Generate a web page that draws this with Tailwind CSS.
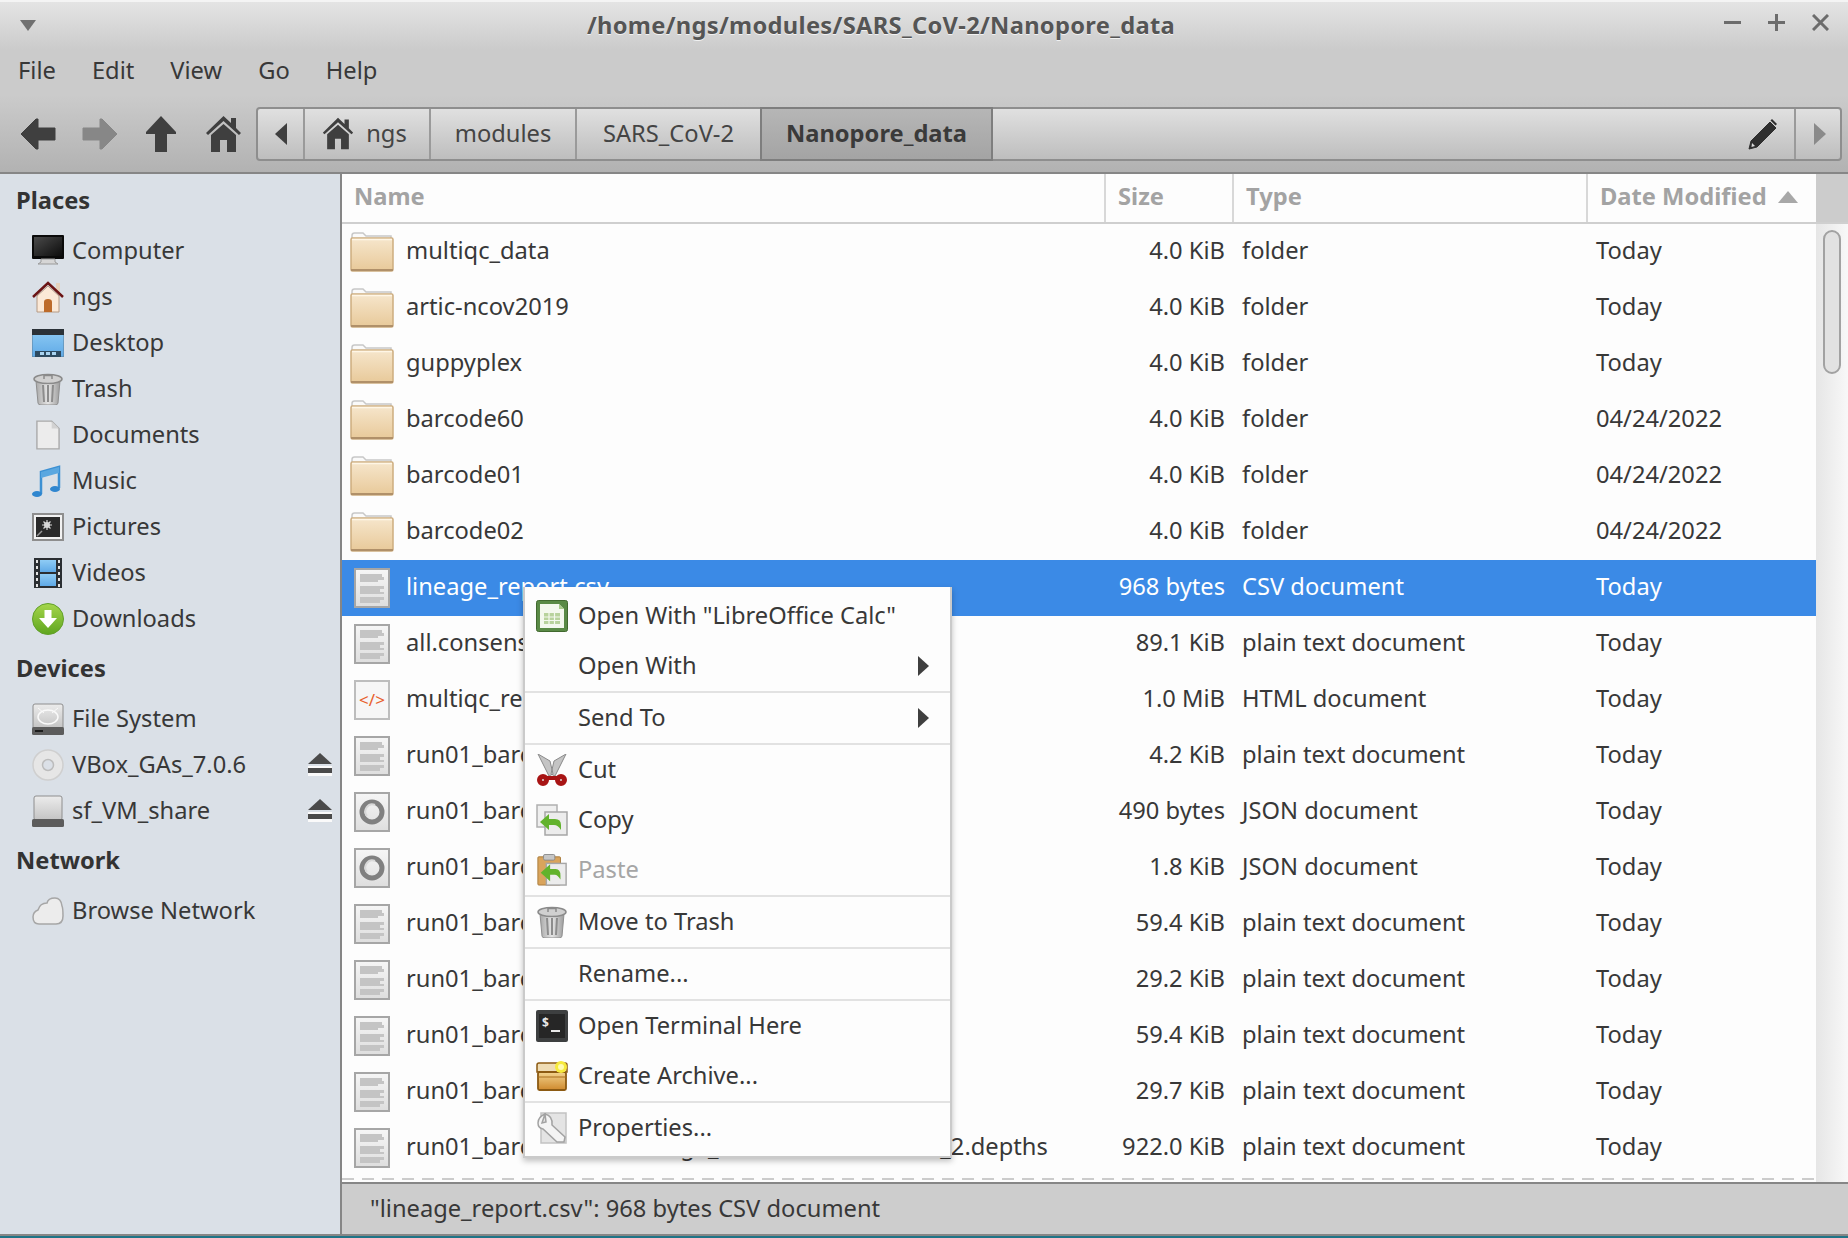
<!DOCTYPE html>
<html lang="en">
<head>
<meta charset="utf-8">
<title>/home/ngs/modules/SARS_CoV-2/Nanopore_data</title>
<script src="https://cdn.jsdelivr.net/npm/@tailwindcss/browser@4"></script>
</head>
<body class="relative w-[1848px] h-[1238px] overflow-hidden flex flex-col bg-[#ccc] text-[#383838] text-[23.7px] font-['Noto_Sans',sans-serif]">

<!-- icon sheet -->
<svg class="absolute w-0 h-0" aria-hidden="true">
  <defs>
    <linearGradient id="gFolder" x1="0" y1="0" x2="0" y2="1"><stop offset="0" stop-color="#f6e6cc"/><stop offset="1" stop-color="#e8c999"/></linearGradient>
    <linearGradient id="gDoc" x1="0" y1="0" x2="0" y2="1"><stop offset="0" stop-color="#f6f6f6"/><stop offset="1" stop-color="#dedede"/></linearGradient>
    <linearGradient id="gScreen" x1="0" y1="0" x2="1" y2="1"><stop offset="0" stop-color="#4a4a4a"/><stop offset="1" stop-color="#0c0c0c"/></linearGradient>
    <linearGradient id="gBlue" x1="0" y1="0" x2="0" y2="1"><stop offset="0" stop-color="#8fccf5"/><stop offset="1" stop-color="#5fa9e6"/></linearGradient>
    <linearGradient id="gTrash" x1="0" y1="0" x2="1" y2="0"><stop offset="0" stop-color="#a9a9a9"/><stop offset=".5" stop-color="#e4e4e4"/><stop offset="1" stop-color="#9c9c9c"/></linearGradient>
    <linearGradient id="gGreen" x1="0" y1="0" x2="0" y2="1"><stop offset="0" stop-color="#a5d64c"/><stop offset="1" stop-color="#5fa51f"/></linearGradient>
    <linearGradient id="gDisk" x1="0" y1="0" x2="0" y2="1"><stop offset="0" stop-color="#ececec"/><stop offset="1" stop-color="#c4c4c4"/></linearGradient>
    <linearGradient id="gBox" x1="0" y1="0" x2="0" y2="1"><stop offset="0" stop-color="#f3d48f"/><stop offset="1" stop-color="#cf8a2e"/></linearGradient>

    <symbol id="i-folder" viewBox="0 0 44 40">
      <path d="M2 8V3.500Q2 1 4.500 1H13l3 3h25v4z" fill="#fafafa" stroke="#c8c8c8" stroke-width="1.500"/>
      <rect x="1" y="6" width="42" height="33" rx="1.500" fill="url(#gFolder)" stroke="#cdad7f" stroke-width="1.500"/>
      <path d="M1 38h42" stroke="#b09069" stroke-width="2"/>
      <path d="M2 7.500h40" stroke="#fff6e6" stroke-width="1.500"/>
    </symbol>
    <symbol id="i-doc" viewBox="0 0 36 40">
      <rect x="1" y="1" width="34" height="38" fill="url(#gDoc)" stroke="#a6a6a6" stroke-width="2"/>
      <path d="M6 6h22v3H6zM6 9h24v3H6zM6 12h18v2H6zM6 18h24v3H6zM6 21h20v3H6zM6 24h24v2H6zM6 29h24v3H6zM6 32h20v3H6z" fill="#c4c4c4"/>
    </symbol>
    <symbol id="i-json" viewBox="0 0 36 40">
      <rect x="1" y="1" width="34" height="38" fill="url(#gDoc)" stroke="#a6a6a6" stroke-width="2"/>
      <circle cx="18" cy="20" r="10" fill="none" stroke="#808080" stroke-width="5"/>
      <path d="M13 24a7 7 0 0 1 8-11" fill="none" stroke="#d8d8d8" stroke-width="2"/>
    </symbol>
    <symbol id="i-html" viewBox="0 0 36 40">
      <rect x="1" y="1" width="34" height="38" fill="#f6f6f6" stroke="#bdbdbd" stroke-width="2"/>
      <text x="18" y="26" text-anchor="middle" font-size="17" font-family="Noto Sans, sans-serif" fill="#e8602c">&lt;/&gt;</text>
    </symbol>
    <symbol id="i-computer" viewBox="0 0 32 32">
      <rect x="0" y="0" width="32" height="24" rx="1" fill="#0a0a0a"/>
      <rect x="2" y="2" width="28" height="19" fill="url(#gScreen)"/>
      <path d="M9 24h14v3l3 2H6l3-2z" fill="#d6d6d6" stroke="#9a9a9a"/>
    </symbol>
    <symbol id="i-home" viewBox="0 0 32 32">
      <path d="M5 15L16 5l11 10v16H5z" fill="#fbe9d7" stroke="#b59a84"/>
      <rect x="24" y="2" width="4" height="9" fill="#e6d3bd"/>
      <path d="M1 16L16 2l15 14" fill="none" stroke="#6b1414" stroke-width="2.500"/>
      <path d="M12 31V21q0-3 4-3t4 3v10z" fill="#bd6b2a"/>
    </symbol>
    <symbol id="i-desktop" viewBox="0 0 32 28">
      <rect x="0" y="0" width="32" height="28" rx="1" fill="url(#gBlue)" stroke="#5c7f99"/>
      <rect x="0" y="0" width="32" height="6" fill="#2b3238"/>
      <path d="M3 28v-6h26v6z" fill="#2d4a60"/>
      <path d="M8 23h4v3H8zM14 23h4v3h-4zM20 23h4v3h-4z" fill="#a9d3f0"/>
    </symbol>
    <symbol id="i-trash" viewBox="0 0 32 32">
      <path d="M4 8h24l-2 22q-.2 2-3 2H9q-2.800 0-3-2z" fill="url(#gTrash)" stroke="#8f8f8f"/>
      <path d="M11 12l1 17M16 12v17M21 12l-1 17" stroke="#8c8c8c" stroke-width="2"/>
      <ellipse cx="16" cy="6" rx="14" ry="4.500" fill="#d0d0d0" stroke="#8a8a8a" stroke-width="1.500"/>
      <path d="M12 6V2.500h8V6" fill="none" stroke="#8a8a8a" stroke-width="1.500"/>
    </symbol>
    <symbol id="i-paper" viewBox="0 0 26 32">
      <path d="M1 1h16l8 8v22H1z" fill="#ececec" stroke="#a9a9a9" stroke-width="1.500"/>
      <path d="M17 1v8h8z" fill="#d2d2d2"/>
    </symbol>
    <symbol id="i-music" viewBox="0 0 32 32">
      <path d="M9 29V7L27 2v21" fill="none" stroke="#3c90d3" stroke-width="2.500"/>
      <path d="M9 7L27 2v6L9 13z" fill="#5aa7e0"/>
      <ellipse cx="5" cy="29" rx="5" ry="3" fill="#2f86cf"/>
      <ellipse cx="23" cy="24" rx="5" ry="3" fill="#2f86cf"/>
    </symbol>
    <symbol id="i-pictures" viewBox="0 0 32 28">
      <rect x="1" y="1" width="30" height="26" fill="#f2f2f2" stroke="#8e8e8e" stroke-width="2"/>
      <rect x="4" y="4" width="24" height="20" fill="#2a2a2a"/>
      <circle cx="15" cy="12" r="3" fill="#d8d8d8"/>
      <path d="M15 7v10M10 12h10M11.500 8.500l7 7M18.500 8.500l-7 7" stroke="#d8d8d8" stroke-width="1.200"/>
      <path d="M5 23l5-5" stroke="#9a9a9a" stroke-width="1.500"/>
    </symbol>
    <symbol id="i-videos" viewBox="0 0 28 30">
      <rect width="28" height="30" fill="#2b2f33"/>
      <rect x="6" y="2" width="16" height="12" fill="url(#gBlue)"/>
      <rect x="6" y="16" width="16" height="12" fill="url(#gBlue)"/>
      <path d="M2 2h2v3H2zM2 8h2v3H2zM2 14h2v3H2zM2 20h2v3H2zM2 26h2v3H2zM24 2h2v3h-2zM24 8h2v3h-2zM24 14h2v3h-2zM24 20h2v3h-2zM24 26h2v3h-2z" fill="#e4e4e4"/>
    </symbol>
    <symbol id="i-download" viewBox="0 0 32 32">
      <circle cx="16" cy="16" r="15.500" fill="url(#gGreen)" stroke="#62a02a"/>
      <path d="M12.500 7h7v8H25L16 25 7 15h5.500z" fill="#fff"/>
    </symbol>
    <symbol id="i-hd" viewBox="0 0 32 32">
      <path d="M3 1h26q2 0 2 2v22H1V3q0-2 2-2z" fill="url(#gDisk)" stroke="#8e8e8e"/>
      <ellipse cx="16" cy="14" rx="10" ry="7" fill="none" stroke="#fafafa" stroke-width="1.500"/>
      <path d="M6 5l6 5M26 5l-6 5" stroke="#fafafa"/>
      <rect x="0" y="24" width="32" height="8" rx="1.500" fill="#5c5c5c"/>
      <path d="M3 28h8" stroke="#1c1c1c" stroke-width="2"/>
    </symbol>
    <symbol id="i-cd" viewBox="0 0 32 32">
      <circle cx="16" cy="16" r="15" fill="#e6e6e6" stroke="#cfcfcf" stroke-width="1.500"/>
      <circle cx="16" cy="16" r="5.500" fill="#dbe0e7" stroke="#bcbcbc" stroke-width="1.500"/>
    </symbol>
    <symbol id="i-drive" viewBox="0 0 32 32">
      <rect x="2" y="1" width="28" height="24" rx="2" fill="url(#gDisk)" stroke="#8e8e8e"/>
      <rect x="0" y="24" width="32" height="8" rx="1.500" fill="#5c5c5c"/>
    </symbol>
    <symbol id="i-cloud" viewBox="0 0 32 28">
      <path d="M7 27Q1 27 1 20q0-5 5-7Q8 6 15 6q1-5 8-5 6 0 7 8 1 2 1 10 0 8-7 8z" fill="#ececec" stroke="#a6a6a6" stroke-width="1.500"/>
    </symbol>
    <symbol id="i-eject" viewBox="0 0 24 24">
      <path d="M12 0l12 11H0z" fill="#4a4a4a"/>
      <rect y="13" width="24" height="2" fill="#fafafa"/>
      <rect y="15" width="24" height="5" fill="#4a4a4a"/>
      <rect y="20" width="24" height="3" fill="#fafafa"/>
    </symbol>
    <symbol id="i-calc" viewBox="0 0 32 32">
      <rect x="0.500" y="0.500" width="31" height="31" rx="2" fill="#5a8a46" stroke="#41692f"/>
      <path d="M4 4h19l5 5v19H4z" fill="#f4f8ee"/>
      <path d="M23 4v5h5z" fill="#a8cb8a"/>
      <path d="M8 13h16v11H8z" fill="#b8d29c"/>
      <path d="M8 17h16M8 20.500h16M13 13v11M18.500 13v11" stroke="#f4f8ee" stroke-width="1.200"/>
    </symbol>
    <symbol id="i-cut" viewBox="0 0 32 32">
      <path d="M2 0l12 7 3 13-4 2zM30 0L18 7l-3 13 4 2z" fill="#c4c4c4" stroke="#8a8a8a"/>
      <circle cx="7" cy="26" r="3.500" fill="#d8d8d8" stroke="#a81414" stroke-width="5"/>
      <circle cx="25" cy="26" r="3.500" fill="#d8d8d8" stroke="#a81414" stroke-width="5"/>
      <path d="M11 24h10" stroke="#a81414" stroke-width="4"/>
    </symbol>
    <symbol id="i-copy" viewBox="0 0 32 32">
      <rect x="1" y="1" width="20" height="22" fill="#efefef" stroke="#b0b0b0" stroke-width="1.500"/>
      <rect x="9" y="8" width="22" height="23" fill="#ececec" stroke="#a6a6a6" stroke-width="1.500"/>
      <path d="M4 18l9-8v5h6q6 0 6 6v5q-3-5-7-5h-5v5z" fill="#62b32c"/>
    </symbol>
    <symbol id="i-paste" viewBox="0 0 32 34">
      <rect x="1" y="3" width="24" height="30" rx="1" fill="#d9a45c" stroke="#a87a3a"/>
      <rect x="7" y="0.500" width="12" height="6" rx="1.500" fill="#c6c6c6" stroke="#8a8a8a"/>
      <rect x="10" y="10" width="21" height="23" fill="#ececec" stroke="#a6a6a6" stroke-width="1.500"/>
      <path d="M4 20l10-9v5h6q5 0 5 7v4q-3-5-6-5h-5v7z" fill="#62b32c"/>
    </symbol>
    <symbol id="i-terminal" viewBox="0 0 32 32">
      <rect width="32" height="32" rx="2" fill="#3d3f40"/>
      <rect x="3" y="4" width="26" height="24" fill="#262626"/>
      <text x="6" y="17" font-size="12" font-weight="700" font-family="Noto Sans, sans-serif" fill="#e8e8e8">$</text>
      <path d="M15 21h9" stroke="#e8e8e8" stroke-width="2"/>
    </symbol>
    <symbol id="i-archive" viewBox="0 0 32 30">
      <path d="M1 4q0-2 2-2h26q2 0 2 2v7H1z" fill="#efdcb4" stroke="#8c5a12" stroke-width="1.500"/>
      <rect x="2" y="11" width="28" height="18" rx="1.500" fill="url(#gBox)" stroke="#8c5a12" stroke-width="1.800"/>
      <path d="M2 16h28" stroke="#a86f1e"/>
      <circle cx="25" cy="6" r="6" fill="#f7ea3c"/>
      <circle cx="25" cy="6" r="3" fill="#fffbb0"/>
    </symbol>
    <symbol id="i-props" viewBox="0 0 30 32">
      <path d="M4 1h25v30H4z" fill="#e4e4e4" stroke="#c2c2c2" stroke-width="1.500"/>
      <path d="M8 2q-7 3-7 9 0 5 5 6l14 13h7l1-5L15 13q1-9-7-11l1 8-4 1z" fill="#f4f4f4" stroke="#a2a2a2" stroke-width="1.500"/>
    </symbol>
    <symbol id="i-tri-right" viewBox="0 0 12 20"><path d="M1 0l11 10L1 20z" fill="currentColor"/></symbol>
  </defs>
</svg>

<!-- title bar -->
<div class="relative h-[50px] shrink-0 flex items-center justify-center border-t-2 border-[#f4f4f4] bg-linear-to-b from-[#e4e4e4] to-[#cbcbcb] text-[#555] font-bold tracking-[0.3px] [text-shadow:0_1px_0_#f2f2f2] pb-[1px] pr-[86px]">
  <svg class="absolute left-[20px] top-[18px] w-[16px] h-[11px]" viewBox="0 0 16 11"><path d="M0 0h16L8 11z" fill="#707070"/></svg>
  <span>/home/ngs/modules/SARS_CoV-2/Nanopore_data</span>
  <div class="absolute right-[19px] top-[12px] flex gap-[27px] items-center">
    <svg class="w-[17px] h-[17px]" viewBox="0 0 17 17"><path d="M0 8.500h17" stroke="#6c6c6c" stroke-width="3"/></svg>
    <svg class="w-[17px] h-[17px]" viewBox="0 0 17 17"><path d="M0 8.500h17M8.500 0v17" stroke="#6c6c6c" stroke-width="3"/></svg>
    <svg class="w-[17px] h-[17px]" viewBox="0 0 17 17"><path d="M1 1l15 15M16 1L1 16" stroke="#6c6c6c" stroke-width="3"/></svg>
  </div>
</div>

<!-- menu bar -->
<div class="h-[45px] shrink-0 flex items-center bg-[#cbcbcb] pl-[18px] pb-[3px] gap-[36px]">
  <span>File</span><span>Edit</span><span>View</span><span>Go</span><span>Help</span>
</div>

<!-- toolbar -->
<div class="h-[79px] shrink-0 flex items-center border-b-2 border-[#868686] bg-linear-to-b from-[#cbcbcb] to-[#b2b2b2] pl-[20px]">
  <svg class="w-[36px] h-[36px]" viewBox="0 0 36 36"><path d="M1 18L16 3h2v9h17v12H18v9h-2z" fill="#3f3f3f" stroke="#3f3f3f" stroke-linejoin="round"/></svg>
  <svg class="w-[36px] h-[36px] ml-[26px]" viewBox="0 0 36 36"><path d="M35 18L20 3h-2v9H1v12h17v9h2z" fill="#878787" stroke="#878787" stroke-linejoin="round"/></svg>
  <svg class="w-[32px] h-[38px] ml-[27px]" viewBox="0 0 32 38"><path d="M16 1L31 17v2h-9v18H10V19H1v-2z" fill="#3f3f3f"/></svg>
  <svg class="w-[35px] h-[38px] ml-[29px]" viewBox="0 0 35 38"><path d="M17.500 1L25 8V3h5v10l5 5-2 2-15.500-14L2 20l-2-2zM5 20L17.500 9 30 20v17h-9V25h-7v12H5z" fill="#3f3f3f"/></svg>
  <div class="ml-[15px] w-[1586px] h-[54px] flex border-2 border-[#8e8e8e] rounded-[4px] bg-linear-to-b from-[#e0e0e0] to-[#bebebe] text-[#444]">
    <div class="w-[47px] flex items-center justify-center border-r-2 border-[#9a9a9a]">
      <svg class="w-[12px] h-[22px]" viewBox="0 0 12 22"><path d="M12 0v22L0 11z" fill="#3f3f3f"/></svg>
    </div>
    <div class="w-[126px] flex items-center justify-center gap-[12px] border-r-2 border-[#9a9a9a] pr-[5px]">
      <svg class="w-[32px] h-[33px]" viewBox="0 0 35 38"><path d="M17.500 1L25 8V3h5v10l5 5-2 2-15.500-14L2 20l-2-2zM5 20L17.500 9 30 20v17h-9V25h-7v12H5z" fill="#3f3f3f"/></svg>
      <span>ngs</span>
    </div>
    <div class="w-[146px] flex items-center justify-center border-r-2 border-[#9a9a9a]">modules</div>
    <div class="w-[183px] flex items-center justify-center">SARS_CoV-2</div>
    <div class="w-[233px] -my-[2px] flex items-center justify-center font-bold border-2 border-[#7e7e7e] bg-linear-to-b from-[#b6b6b6] to-[#a4a4a4] text-[#3a3a3a]">Nanopore_data</div>
    <div class="flex-1 flex items-center justify-end pr-[16px]">
      <svg class="w-[30px] h-[32px]" viewBox="0 0 30 32"><path d="M22 4l6 6L9 29l-8 2 2-8z" fill="#2f2f2f" stroke="#2f2f2f"/><path d="M24 1l5 5-1.500 1.500-5-5z" fill="#2f2f2f"/><path d="M4 25l3 3-3.500 1z" fill="#ddd"/></svg>
    </div>
    <div class="w-[46px] flex items-center justify-center border-l-2 border-[#9a9a9a] pl-[3px]">
      <svg class="w-[12px] h-[22px]" viewBox="0 0 12 22"><path d="M0 0v22l12-11z" fill="#8a8a8a"/></svg>
    </div>
  </div>
</div>

<!-- main -->
<div class="flex-1 flex min-h-0">
  <!-- side pane -->
  <aside class="w-[342px] shrink-0 border-r-2 border-[#868686] bg-[#dae0e7] pt-[4px]">
    <div class="h-[46px] mb-[4px] flex items-center pl-[16px] font-bold text-[#333]">Places</div>
    <div class="h-[46px] flex items-center pl-[32px] gap-[8px]"><svg class="w-[32px] h-[32px]"><use href="#i-computer"/></svg>Computer</div>
    <div class="h-[46px] flex items-center pl-[32px] gap-[8px]"><svg class="w-[32px] h-[32px]"><use href="#i-home"/></svg>ngs</div>
    <div class="h-[46px] flex items-center pl-[32px] gap-[8px]"><svg class="w-[32px] h-[28px]"><use href="#i-desktop"/></svg>Desktop</div>
    <div class="h-[46px] flex items-center pl-[32px] gap-[8px]"><svg class="w-[32px] h-[32px]"><use href="#i-trash"/></svg>Trash</div>
    <div class="h-[46px] flex items-center pl-[36px] gap-[12px]"><svg class="w-[24px] h-[32px]"><use href="#i-paper"/></svg>Documents</div>
    <div class="h-[46px] flex items-center pl-[32px] gap-[8px]"><svg class="w-[32px] h-[32px]"><use href="#i-music"/></svg>Music</div>
    <div class="h-[46px] flex items-center pl-[32px] gap-[8px]"><svg class="w-[32px] h-[28px]"><use href="#i-pictures"/></svg>Pictures</div>
    <div class="h-[46px] flex items-center pl-[34px] gap-[10px]"><svg class="w-[28px] h-[30px]"><use href="#i-videos"/></svg>Videos</div>
    <div class="h-[46px] flex items-center pl-[32px] gap-[8px]"><svg class="w-[32px] h-[32px]"><use href="#i-download"/></svg>Downloads</div>
    <div class="h-[54px] flex items-center pl-[16px] font-bold text-[#333]">Devices</div>
    <div class="h-[46px] flex items-center pl-[32px] gap-[8px]"><svg class="w-[32px] h-[32px]"><use href="#i-hd"/></svg>File System</div>
    <div class="h-[46px] flex items-center pl-[32px] pr-[8px] gap-[8px]"><svg class="w-[32px] h-[32px]"><use href="#i-cd"/></svg>VBox_GAs_7.0.6<svg class="w-[24px] h-[24px] ml-auto"><use href="#i-eject"/></svg></div>
    <div class="h-[46px] flex items-center pl-[32px] pr-[8px] gap-[8px]"><svg class="w-[32px] h-[32px]"><use href="#i-drive"/></svg>sf_VM_share<svg class="w-[24px] h-[24px] ml-auto"><use href="#i-eject"/></svg></div>
    <div class="h-[54px] flex items-center pl-[16px] font-bold text-[#333]">Network</div>
    <div class="h-[46px] flex items-center pl-[32px] gap-[8px]"><svg class="w-[32px] h-[28px]"><use href="#i-cloud"/></svg>Browse Network</div>
  </aside>

  <!-- file list + status -->
  <div class="flex-1 flex flex-col min-w-0">
    <div class="flex-1 flex min-h-0 bg-[#fdfdfd]">
      <div class="flex-1 min-w-0">
        <div class="h-[50px] grid grid-cols-[764px_128px_354px_228px] border-b-2 border-[#cfcfcf] font-bold text-[#a3a3a3]">
          <div class="flex items-center pl-[12px] pb-[2px] border-r-2 border-[#d8d8d8]">Name</div>
          <div class="flex items-center pl-[12px] pb-[2px] border-r-2 border-[#d8d8d8]">Size</div>
          <div class="flex items-center pl-[12px] pb-[2px] border-r-2 border-[#d8d8d8]">Type</div>
          <div class="flex items-center pl-[12px] pb-[2px] gap-[11px]">Date Modified<svg class="w-[20px] h-[12px]" viewBox="0 0 20 12"><path d="M10 0l10 12H0z" fill="#a8a8a8"/></svg></div>
        </div>

        <div class="h-[56px] pb-[2px] grid grid-cols-[762px_128px_354px_230px] items-center">
          <div class="flex items-center overflow-hidden whitespace-nowrap"><svg class="w-[44px] h-[40px] ml-[8px] mr-[12px] mt-[2px] shrink-0"><use href="#i-folder"/></svg>multiqc_data</div>
          <div class="text-right pr-[7px]">4.0 KiB</div><div class="pl-[10px]">folder</div><div class="pl-[10px]">Today</div>
        </div>
        <div class="h-[56px] pb-[2px] grid grid-cols-[762px_128px_354px_230px] items-center">
          <div class="flex items-center overflow-hidden whitespace-nowrap"><svg class="w-[44px] h-[40px] ml-[8px] mr-[12px] mt-[2px] shrink-0"><use href="#i-folder"/></svg>artic-ncov2019</div>
          <div class="text-right pr-[7px]">4.0 KiB</div><div class="pl-[10px]">folder</div><div class="pl-[10px]">Today</div>
        </div>
        <div class="h-[56px] pb-[2px] grid grid-cols-[762px_128px_354px_230px] items-center">
          <div class="flex items-center overflow-hidden whitespace-nowrap"><svg class="w-[44px] h-[40px] ml-[8px] mr-[12px] mt-[2px] shrink-0"><use href="#i-folder"/></svg>guppyplex</div>
          <div class="text-right pr-[7px]">4.0 KiB</div><div class="pl-[10px]">folder</div><div class="pl-[10px]">Today</div>
        </div>
        <div class="h-[56px] pb-[2px] grid grid-cols-[762px_128px_354px_230px] items-center">
          <div class="flex items-center overflow-hidden whitespace-nowrap"><svg class="w-[44px] h-[40px] ml-[8px] mr-[12px] mt-[2px] shrink-0"><use href="#i-folder"/></svg>barcode60</div>
          <div class="text-right pr-[7px]">4.0 KiB</div><div class="pl-[10px]">folder</div><div class="pl-[10px]">04/24/2022</div>
        </div>
        <div class="h-[56px] pb-[2px] grid grid-cols-[762px_128px_354px_230px] items-center">
          <div class="flex items-center overflow-hidden whitespace-nowrap"><svg class="w-[44px] h-[40px] ml-[8px] mr-[12px] mt-[2px] shrink-0"><use href="#i-folder"/></svg>barcode01</div>
          <div class="text-right pr-[7px]">4.0 KiB</div><div class="pl-[10px]">folder</div><div class="pl-[10px]">04/24/2022</div>
        </div>
        <div class="h-[56px] pb-[2px] grid grid-cols-[762px_128px_354px_230px] items-center">
          <div class="flex items-center overflow-hidden whitespace-nowrap"><svg class="w-[44px] h-[40px] ml-[8px] mr-[12px] mt-[2px] shrink-0"><use href="#i-folder"/></svg>barcode02</div>
          <div class="text-right pr-[7px]">4.0 KiB</div><div class="pl-[10px]">folder</div><div class="pl-[10px]">04/24/2022</div>
        </div>
        <div class="h-[56px] pb-[2px] grid grid-cols-[762px_128px_354px_230px] items-center bg-[#3b8ae6] text-white">
          <div class="flex items-center overflow-hidden whitespace-nowrap"><svg class="w-[36px] h-[40px] ml-[12px] mr-[16px] mt-[2px] shrink-0"><use href="#i-doc"/></svg>lineage_report.csv</div>
          <div class="text-right pr-[7px]">968 bytes</div><div class="pl-[10px]">CSV document</div><div class="pl-[10px]">Today</div>
        </div>
        <div class="h-[56px] pb-[2px] grid grid-cols-[762px_128px_354px_230px] items-center">
          <div class="flex items-center overflow-hidden whitespace-nowrap"><svg class="w-[36px] h-[40px] ml-[12px] mr-[16px] mt-[2px] shrink-0"><use href="#i-doc"/></svg>all.consensus.fasta</div>
          <div class="text-right pr-[7px]">89.1 KiB</div><div class="pl-[10px]">plain text document</div><div class="pl-[10px]">Today</div>
        </div>
        <div class="h-[56px] pb-[2px] grid grid-cols-[762px_128px_354px_230px] items-center">
          <div class="flex items-center overflow-hidden whitespace-nowrap"><svg class="w-[36px] h-[40px] ml-[12px] mr-[16px] mt-[2px] shrink-0"><use href="#i-html"/></svg>multiqc_report.html</div>
          <div class="text-right pr-[7px]">1.0 MiB</div><div class="pl-[10px]">HTML document</div><div class="pl-[10px]">Today</div>
        </div>
        <div class="h-[56px] pb-[2px] grid grid-cols-[762px_128px_354px_230px] items-center">
          <div class="flex items-center overflow-hidden whitespace-nowrap"><svg class="w-[36px] h-[40px] ml-[12px] mr-[16px] mt-[2px] shrink-0"><use href="#i-doc"/></svg>run01_barcode01.alignreport.txt</div>
          <div class="text-right pr-[7px]">4.2 KiB</div><div class="pl-[10px]">plain text document</div><div class="pl-[10px]">Today</div>
        </div>
        <div class="h-[56px] pb-[2px] grid grid-cols-[762px_128px_354px_230px] items-center">
          <div class="flex items-center overflow-hidden whitespace-nowrap"><svg class="w-[36px] h-[40px] ml-[12px] mr-[16px] mt-[2px] shrink-0"><use href="#i-json"/></svg>run01_barcode01.pass.json</div>
          <div class="text-right pr-[7px]">490 bytes</div><div class="pl-[10px]">JSON document</div><div class="pl-[10px]">Today</div>
        </div>
        <div class="h-[56px] pb-[2px] grid grid-cols-[762px_128px_354px_230px] items-center">
          <div class="flex items-center overflow-hidden whitespace-nowrap"><svg class="w-[36px] h-[40px] ml-[12px] mr-[16px] mt-[2px] shrink-0"><use href="#i-json"/></svg>run01_barcode02.pass.json</div>
          <div class="text-right pr-[7px]">1.8 KiB</div><div class="pl-[10px]">JSON document</div><div class="pl-[10px]">Today</div>
        </div>
        <div class="h-[56px] pb-[2px] grid grid-cols-[762px_128px_354px_230px] items-center">
          <div class="flex items-center overflow-hidden whitespace-nowrap"><svg class="w-[36px] h-[40px] ml-[12px] mr-[16px] mt-[2px] shrink-0"><use href="#i-doc"/></svg>run01_barcode01.coverage_1.txt</div>
          <div class="text-right pr-[7px]">59.4 KiB</div><div class="pl-[10px]">plain text document</div><div class="pl-[10px]">Today</div>
        </div>
        <div class="h-[56px] pb-[2px] grid grid-cols-[762px_128px_354px_230px] items-center">
          <div class="flex items-center overflow-hidden whitespace-nowrap"><svg class="w-[36px] h-[40px] ml-[12px] mr-[16px] mt-[2px] shrink-0"><use href="#i-doc"/></svg>run01_barcode01.coverage_2.txt</div>
          <div class="text-right pr-[7px]">29.2 KiB</div><div class="pl-[10px]">plain text document</div><div class="pl-[10px]">Today</div>
        </div>
        <div class="h-[56px] pb-[2px] grid grid-cols-[762px_128px_354px_230px] items-center">
          <div class="flex items-center overflow-hidden whitespace-nowrap"><svg class="w-[36px] h-[40px] ml-[12px] mr-[16px] mt-[2px] shrink-0"><use href="#i-doc"/></svg>run01_barcode02.coverage_1.txt</div>
          <div class="text-right pr-[7px]">59.4 KiB</div><div class="pl-[10px]">plain text document</div><div class="pl-[10px]">Today</div>
        </div>
        <div class="h-[56px] pb-[2px] grid grid-cols-[762px_128px_354px_230px] items-center">
          <div class="flex items-center overflow-hidden whitespace-nowrap"><svg class="w-[36px] h-[40px] ml-[12px] mr-[16px] mt-[2px] shrink-0"><use href="#i-doc"/></svg>run01_barcode02.coverage_2.txt</div>
          <div class="text-right pr-[7px]">29.7 KiB</div><div class="pl-[10px]">plain text document</div><div class="pl-[10px]">Today</div>
        </div>
        <div class="h-[56px] pb-[2px] grid grid-cols-[762px_128px_354px_230px] items-center">
          <div class="flex items-center overflow-hidden whitespace-nowrap"><svg class="w-[36px] h-[40px] ml-[12px] mr-[16px] mt-[2px] shrink-0"><use href="#i-doc"/></svg>run01_barcode01.coverage_mask.txt.nCoV-2019_2.depths</div>
          <div class="text-right pr-[7px]">922.0 KiB</div><div class="pl-[10px]">plain text document</div><div class="pl-[10px]">Today</div>
        </div>
        <div class="h-[2px] mt-[2px] bg-[repeating-linear-gradient(90deg,#ccc_0,#ccc_12px,transparent_12px,transparent_20px)]"></div>
      </div>
      <!-- scrollbar -->
      <div class="w-[32px] shrink-0 flex flex-col">
        <div class="h-[50px] bg-[#ccc] border-b-2 border-[#cfcfcf]"></div>
        <div class="flex-1 bg-linear-to-r from-[#e6e6e6] to-[#f8f8f8] pl-[7px] pt-[6px]">
          <div class="w-[18px] h-[144px] rounded-t-[9px] rounded-b-[9px] border-2 border-[#a2a2a2] bg-[#e2e2e2]"></div>
        </div>
      </div>
    </div>
    <div class="h-[52px] shrink-0 flex items-center border-t-2 border-[#868686] bg-[#cdcdcd] pl-[28px]">"lineage_report.csv": 968 bytes CSV document</div>
  </div>
</div>
<div class="h-[4px] shrink-0 border-b-2 border-[#1f7487] bg-[#868686]"></div>

<!-- context menu -->
<div class="absolute left-[523px] top-[587px] w-[429px] h-[571px] py-[4px] bg-[#fdfdfd] border-x-2 border-b-2 border-[#cacaca] shadow-[0_3px_6px_rgba(0,0,0,0.25)]">
  <div class="h-[50px] flex items-center pl-[11px] gap-[10px]"><svg class="w-[32px] h-[32px]"><use href="#i-calc"/></svg>Open With "LibreOffice Calc"</div>
  <div class="h-[50px] flex items-center pl-[53px] pr-[21px] justify-between">Open With<svg class="w-[12px] h-[20px] text-[#3f3f3f]"><use href="#i-tri-right"/></svg></div>
  <div class="h-[2px] bg-[#e2e2e2]"></div>
  <div class="h-[50px] flex items-center pl-[53px] pr-[21px] justify-between">Send To<svg class="w-[12px] h-[20px] text-[#3f3f3f]"><use href="#i-tri-right"/></svg></div>
  <div class="h-[2px] bg-[#e2e2e2]"></div>
  <div class="h-[50px] flex items-center pl-[11px] gap-[10px]"><svg class="w-[32px] h-[32px]"><use href="#i-cut"/></svg>Cut</div>
  <div class="h-[50px] flex items-center pl-[11px] gap-[10px]"><svg class="w-[32px] h-[32px]"><use href="#i-copy"/></svg>Copy</div>
  <div class="h-[50px] flex items-center pl-[11px] gap-[10px] text-[#a6a6a6]"><svg class="w-[32px] h-[32px]"><use href="#i-paste"/></svg>Paste</div>
  <div class="h-[2px] bg-[#e2e2e2]"></div>
  <div class="h-[50px] flex items-center pl-[11px] gap-[10px]"><svg class="w-[32px] h-[32px]"><use href="#i-trash"/></svg>Move to Trash</div>
  <div class="h-[2px] bg-[#e2e2e2]"></div>
  <div class="h-[50px] flex items-center pl-[53px]">Rename...</div>
  <div class="h-[2px] bg-[#e2e2e2]"></div>
  <div class="h-[50px] flex items-center pl-[11px] gap-[10px]"><svg class="w-[32px] h-[32px]"><use href="#i-terminal"/></svg>Open Terminal Here</div>
  <div class="h-[50px] flex items-center pl-[11px] gap-[10px]"><svg class="w-[32px] h-[30px]"><use href="#i-archive"/></svg>Create Archive...</div>
  <div class="h-[2px] bg-[#e2e2e2]"></div>
  <div class="h-[50px] flex items-center pl-[11px] gap-[10px]"><svg class="w-[32px] h-[32px]"><use href="#i-props"/></svg>Properties...</div>
</div>

</body>
</html>
